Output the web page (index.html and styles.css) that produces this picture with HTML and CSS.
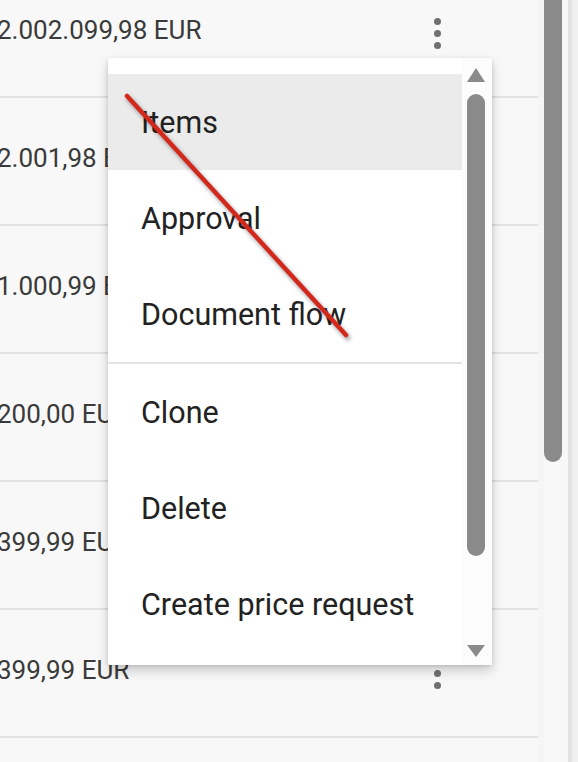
FILE: index.html
```html
<!DOCTYPE html>
<html lang="en">
<head>
<meta charset="utf-8">
<title>Row actions menu</title>
<link rel="stylesheet" href="styles.css">
</head>
<body>
<div class="page">
  <div class="list">
    <div class="rows">
      <div class="row"><span class="amount">2.002.099,98 EUR</span><span class="kebab"><i></i><i></i><i></i></span></div>
      <div class="row"><span class="amount">2.001,98 EUR</span><span class="kebab"><i></i><i></i><i></i></span></div>
      <div class="row"><span class="amount">1.000,99 EUR</span><span class="kebab"><i></i><i></i><i></i></span></div>
      <div class="row"><span class="amount">200,00 EUR</span><span class="kebab"><i></i><i></i><i></i></span></div>
      <div class="row"><span class="amount">399,99 EUR</span><span class="kebab"><i></i><i></i><i></i></span></div>
      <div class="row"><span class="amount">399,99 EUR</span><span class="kebab"><i></i><i></i><i></i></span></div>
      <div class="row"><span class="amount"></span></div>
    </div>
    <div class="gutter"></div>
  </div>
  <div class="vscroll"><div class="vthumb"></div></div>
  <div class="edge"><div class="edge-a"></div><div class="edge-b"></div><div class="edge-c"></div></div>
</div>

<div class="menu">
  <div class="menu-list">
    <div class="menu-item active">Items</div>
    <div class="menu-item">Approval</div>
    <div class="menu-item">Document flow</div>
    <div class="menu-divider"></div>
    <div class="menu-item">Clone</div>
    <div class="menu-item">Delete</div>
    <div class="menu-item">Create price request</div>
  </div>
  <div class="menu-scroll">
    <div class="arrow-up"></div>
    <div class="menu-thumb"></div>
    <div class="arrow-down"></div>
  </div>
</div>

<svg class="annotation" width="578" height="762" viewBox="0 0 578 762" aria-hidden="true">
  <line x1="127" y1="96" x2="346" y2="335" stroke="#d3291d" stroke-width="4.5" stroke-linecap="round"/>
</svg>
</body>
</html>
```

FILE: styles.css
```css
html, body {
  margin: 0;
  padding: 0;
}
body {
  width: 578px;
  height: 762px;
  overflow: hidden;
  background: #f8f8f8;
  font-family: Roboto, "Liberation Sans", sans-serif;
  position: relative;
}
.page {
  display: flex;
  height: 762px;
  overflow: hidden;
}
.list {
  display: flex;
  width: 544px;
  flex: none;
}
.rows {
  width: 538px;
  margin-top: -30px;
}
.row {
  height: 128px;
  box-sizing: border-box;
  border-bottom: 2px solid #e2e2e2;
  display: flex;
  align-items: center;
  overflow: hidden;
}
.amount {
  flex: 1;
  margin-left: -3px;
  margin-top: -6px;
  font-size: 26px;
  color: #3a3a3a;
  white-space: nowrap;
}
.kebab {
  display: flex;
  flex-direction: column;
  gap: 5px;
  width: 7px;
  margin-right: 97px;
}
.kebab i {
  display: block;
  width: 7px;
  height: 7px;
  border-radius: 50%;
  background: #707070;
}
.gutter {
  width: 6px;
  background: #f5f5f5;
}
.vscroll {
  width: 18px;
  flex: none;
  background: #f8f8f8;
}
.vthumb {
  height: 462px;
  background: #8a8a8a;
  border-radius: 0 0 9px 9px;
}
.edge {
  display: flex;
  flex: none;
  width: 16px;
}
.edge-a { width: 6px; background: #f7f7f7; }
.edge-b { width: 4px; background: #e3e3e3; }
.edge-c { width: 6px; background: #f0f0f0; }

.menu {
  position: absolute;
  left: 108px;
  top: 58px;
  width: 384px;
  height: 607px;
  background: #fff;
  display: flex;
  border-radius: 2px;
  box-shadow: 0 6px 12px rgba(0, 0, 0, 0.18), 0 1px 4px rgba(0, 0, 0, 0.12);
}
.menu-list {
  width: 354px;
  padding-top: 16px;
  overflow: hidden;
}
.menu-item {
  height: 96px;
  display: flex;
  align-items: center;
  padding-left: 33px;
  font-size: 30.5px;
  color: #222;
  white-space: nowrap;
}
.menu-item.active {
  background: #ebebeb;
}
.menu-divider {
  height: 2px;
  background: #e3e3e3;
}
.menu-scroll {
  width: 30px;
  display: flex;
  flex-direction: column;
  align-items: flex-start;
  padding-left: 5px;
  box-sizing: border-box;
  background: #fcfcfc;
}
.arrow-up {
  margin-top: 10px;
  width: 0;
  height: 0;
  border-left: 9px solid transparent;
  border-right: 9px solid transparent;
  border-bottom: 14px solid #8a8a8a;
}
.menu-thumb {
  margin-top: 12px;
  width: 18px;
  height: 462px;
  border-radius: 9px;
  background: #8a8a8a;
}
.arrow-down {
  margin-top: 89px;
  width: 0;
  height: 0;
  border-left: 9px solid transparent;
  border-right: 9px solid transparent;
  border-top: 12px solid #8a8a8a;
}
.annotation {
  position: absolute;
  left: 0;
  top: 0;
  filter: drop-shadow(2px 3px 2px rgba(0, 0, 0, 0.4));
  pointer-events: none;
}
```
